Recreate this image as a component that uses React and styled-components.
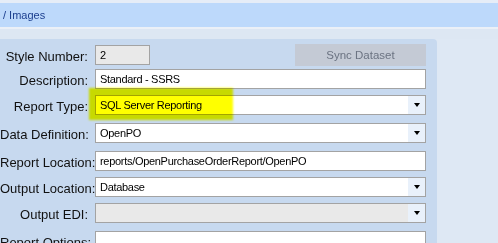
import React from 'react';
import styled, { createGlobalStyle } from 'styled-components';

const Global = createGlobalStyle`
  html, body {
    margin: 0;
    padding: 0;
    background: #dee8f4;
    overflow: hidden;
  }
  body {
    font-family: "Liberation Sans", Arial, sans-serif;
  }
`;

const Page = styled.div`
  width: 498px;
  height: 243px;
  background: #dee8f4;
  position: relative;
  overflow: hidden;
`;

const TopStrip = styled.div`
  height: 3px;
  background: #e6edf7;
`;

// 面包屑条
const Crumbs = styled.div`
  height: 24px;
  background: #bdd9fb;
  display: flex;
  align-items: center;
  padding-left: 3px;
  font-size: 11px;
  color: #1c3f8f;
`;

const Divider = styled.div`
  height: 2px;
  background: #ebf0f7;
`;

const SubBand = styled.div`
  height: 10px;
  background: #dde7f3;
`;

const Panel = styled.div`
  width: 437px;
  height: 210px;
  background: #c7d9ef;
  border-top-right-radius: 4px;
  padding-top: 5px;
  box-sizing: border-box;
`;

const Row = styled.div`
  display: grid;
  grid-template-columns: 88px 331px;
  column-gap: 7px;
  align-items: center;
  margin-top: ${p => p.$gap || 0}px;
`;

const Label = styled.div`
  font-size: 13px;
  color: #111;
  text-align: right;
  white-space: nowrap;
  padding-top: 3px;
`;

const Field = styled.div`
  height: 20px;
  box-sizing: border-box;
  border: 1px solid #a3a3a3;
  background: ${p => (p.$disabled ? '#e9e9e9' : '#fff')};
  width: ${p => (p.$w ? `${p.$w}px` : '100%')};
  display: flex;
  align-items: center;
  font-size: 11px;
  letter-spacing: -0.3px;
  color: #000;
  padding-left: 4px;
  white-space: nowrap;
  overflow: hidden;
`;

const FieldText = styled.span`
  flex: 1;
`;

const DropButton = styled.div`
  width: 17px;
  align-self: stretch;
  background: #e9f1fb;
  display: flex;
  align-items: center;
  justify-content: center;
`;

const Arrow = styled.div`
  width: 0;
  height: 0;
  border-left: 3.5px solid transparent;
  border-right: 3.5px solid transparent;
  border-top: 4px solid #000;
`;

const FirstLine = styled.div`
  display: flex;
  align-items: center;
`;

const SyncButton = styled.div`
  margin-left: auto;
  width: 131px;
  height: 22px;
  background: #c4cad5;
  color: #6b7382;
  font-size: 11.5px;
  display: flex;
  align-items: center;
  justify-content: center;
`;

// 荧光笔标记
const Highlight = styled.div`
  position: absolute;
  left: 89px;
  top: 88px;
  width: 144px;
  height: 32px;
  background: #ffff00;
  mix-blend-mode: multiply;
  filter: blur(0.8px);
  pointer-events: none;
`;

const Select = ({ value, disabled }) => (
  <Field $disabled={disabled} style={{ paddingRight: 0 }}>
    <FieldText>{value}</FieldText>
    <DropButton>
      <Arrow />
    </DropButton>
  </Field>
);

const App = () => (
  <Page>
    <Global />
    <TopStrip />
    <Crumbs>/ Images</Crumbs>
    <Divider />
    <SubBand />
    <Panel>
      <Row>
        <Label>Style Number:</Label>
        <FirstLine>
          <Field $disabled $w={55}>2</Field>
          <SyncButton>Sync Dataset</SyncButton>
        </FirstLine>
      </Row>
      <Row $gap={3}>
        <Label>Description:</Label>
        <Field>Standard - SSRS</Field>
      </Row>
      <Row $gap={6}>
        <Label>Report Type:</Label>
        <Select value="SQL Server Reporting" />
      </Row>
      <Row $gap={8}>
        <Label>Data Definition:</Label>
        <Select value="OpenPO" />
      </Row>
      <Row $gap={8}>
        <Label>Report Location:</Label>
        <Field>reports/OpenPurchaseOrderReport/OpenPO</Field>
      </Row>
      <Row $gap={6}>
        <Label>Output Location:</Label>
        <Select value="Database" />
      </Row>
      <Row $gap={6}>
        <Label>Output EDI:</Label>
        <Select value="" disabled />
      </Row>
      <Row $gap={8}>
        <Label>Report Options:</Label>
        <Field />
      </Row>
    </Panel>
    <Highlight />
  </Page>
);

export default App;
